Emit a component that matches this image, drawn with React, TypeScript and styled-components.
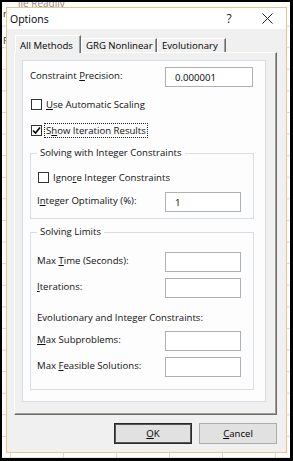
import React from "react"
import styled, { createGlobalStyle } from "styled-components"

const GlobalStyle = createGlobalStyle`
  html, body {
    margin: 0;
    padding: 0;
    background: #fff;
  }
  body {
    font-family: "Open Sans", "Noto Sans", "Liberation Sans", sans-serif;
    font-size: 9.6px;
    color: #111;
  }
`

const Frame = styled.div`
  box-sizing: border-box;
  width: 293px;
  height: 461px;
  border-style: solid;
  border-color: #000;
  border-width: 2px 3px 3px 2px;
  display: grid;
  grid-template-columns: 4px 281px 1fr;
  grid-template-rows: 5px 446px 1fr;
  overflow: hidden;
  background-color: #fff;
  background-image: linear-gradient(to right, #d6d6d6 1px, transparent 1px),
    linear-gradient(to bottom, #d6d6d6 1px, transparent 1px);
  background-size: 53px 100%, 100% 21.6px;
  background-position: 8px 0, 0 2px;
`

const TopStrip = styled.div`
  grid-column: 1 / -1;
  grid-row: 1;
  overflow: hidden;
  padding-left: 16px;
  background: #fff;
`

const SheetText = styled.div`
  margin-top: -5px;
  line-height: 12px;
  font-size: 10px;
  color: #888;
`

const SideStrip = styled.div`
  grid-column: 1;
  grid-row: 2;
  overflow: hidden;
  display: flex;
  flex-direction: column;
  line-height: 12px;
  color: #333;
`

const SideLetter = styled.span<{ $top: number }>`
  margin-top: ${(p) => p.$top}px;
  margin-left: 1px;
`

const Dialog = styled.div`
  grid-column: 2;
  grid-row: 2;
  box-sizing: border-box;
  border: 1px solid #f0c189;
  background: #f0f0f0;
  display: flex;
  flex-direction: column;
`

const TitleBar = styled.div`
  height: 21px;
  background: #fff;
  display: flex;
  align-items: center;
  padding: 0 2px 0 3px;
`

const Title = styled.span`
  flex: 1;
  font-size: 10.5px;
  color: #000;
`

const CaptionButton = styled.span<{ $w: number }>`
  width: ${(p) => p.$w}px;
  height: 21px;
  display: flex;
  align-items: center;
  justify-content: center;
  font-size: 12px;
  color: #222;
`

const Body = styled.div`
  flex: 1;
  display: flex;
  flex-direction: column;
  padding: 6px 9px 0 7px;
`

const TabRow = styled.div`
  height: 17px;
  display: flex;
  align-items: flex-end;
  padding-left: 1px;
`

const Tab = styled.div<{ $w: number; $active?: boolean }>`
  box-sizing: border-box;
  width: ${(p) => p.$w}px;
  height: ${(p) => (p.$active ? 18 : 14)}px;
  margin-bottom: ${(p) => (p.$active ? -1 : 0)}px;
  position: relative;
  z-index: ${(p) => (p.$active ? 1 : 0)};
  background: #f0f0f0;
  border-top: 1px solid #fff;
  border-left: 1px solid #fff;
  border-right: 1px solid #6b6b6b;
  box-shadow: inset -1px 0 0 #a0a0a0;
  padding: ${(p) => (p.$active ? "2px" : "0")} 0 0 4px;
  display: flex;
  align-items: center;
  white-space: nowrap;
  overflow: hidden;
  color: #000;
`

const Panel = styled.div`
  box-sizing: border-box;
  width: 263px;
  height: 363px;
  border-style: solid;
  border-width: 1px;
  border-color: #fff #6b6b6b #6b6b6b #fff;
  box-shadow: inset -1px -1px 0 #a0a0a0;
  padding: 7px 0 0 7px;
`

const InnerBox = styled.div`
  box-sizing: border-box;
  width: 244px;
  height: 342px;
  background: #fdfdfd;
  border: 1px solid #d7dee6;
  padding: 6px 0 0 7px;
  display: flex;
  flex-direction: column;
`

const FieldRow = styled.div<{ $mt?: number }>`
  display: flex;
  align-items: center;
  height: 20px;
  margin-top: ${(p) => p.$mt ?? 0}px;
`

const FieldLabel = styled.span<{ $w: number }>`
  width: ${(p) => p.$w}px;
  white-space: nowrap;
  margin-top: -3px;
`

const TextBox = styled.input<{ $w: number }>`
  box-sizing: border-box;
  width: ${(p) => p.$w}px;
  height: 20px;
  margin: 0;
  border: 1px solid #adb0b6;
  background: #fff;
  padding: 0 0 0 9px;
  font: inherit;
  color: #000;
  outline: none;
`

const CheckRow = styled.div<{ $mt?: number }>`
  display: flex;
  align-items: center;
  gap: 3px;
  height: 14px;
  margin-top: ${(p) => p.$mt ?? 0}px;
`

const Box = styled.span`
  box-sizing: border-box;
  width: 11px;
  height: 11px;
  margin-left: 1px;
  border: 1px solid #333;
  background: #fff;
  display: flex;
  align-items: center;
  justify-content: center;
`

const CheckText = styled.span<{ $focus?: boolean }>`
  white-space: nowrap;
  padding: 0 1px;
  outline: ${(p) => (p.$focus ? "1px dotted #222" : "none")};
  line-height: 13px;
`

const Group = styled.fieldset<{ $pt: number; $pb: number; $mt: number }>`
  box-sizing: border-box;
  width: 224px;
  min-inline-size: 0;
  margin: ${(p) => p.$mt}px 0 0 0;
  padding: ${(p) => p.$pt}px 0 ${(p) => p.$pb}px 6px;
  border: 1px solid #d7dee6;
  display: flex;
  flex-direction: column;
`

const Legend = styled.legend`
  padding: 0 3px;
  line-height: 14px;
  color: #111;
`

const Note = styled.div`
  margin-top: 13px;
  line-height: 14px;
  white-space: nowrap;
`

const ButtonRow = styled.div`
  display: flex;
  justify-content: flex-end;
  gap: 7px;
  margin-top: 8px;
`

const Button = styled.button<{ $default?: boolean }>`
  box-sizing: border-box;
  width: 78px;
  height: 21px;
  margin: 0;
  padding: 0;
  font: inherit;
  color: #000;
  background: #e1e1e1;
  border: 1px solid ${(p) => (p.$default ? "#2a2a2a" : "#adadad")};
  box-shadow: ${(p) => (p.$default ? "inset 0 0 0 1px #555" : "none")};
`

const Key = styled.span`
  text-decoration: underline;
  text-underline-offset: 1px;
`

const Check = () => (
  <svg width="9" height="9" viewBox="0 0 9 9">
    <path d="M1 4.5 L3.5 7 L8 1.5" fill="none" stroke="#000" strokeWidth="1.6" />
  </svg>
)

const CloseGlyph = () => (
  <svg width="11" height="11" viewBox="0 0 11 11">
    <path d="M0.5 0.5 L10.5 10.5 M10.5 0.5 L0.5 10.5" stroke="#222" strokeWidth="1" />
  </svg>
)

const App: React.FC = () => {
  return (
    <>
      <GlobalStyle />
      <Frame>
        <TopStrip>
          <SheetText>ile Readily</SheetText>
        </TopStrip>
        <SideStrip>
          <SideLetter $top={1}>r</SideLetter>
          <SideLetter $top={15}>F</SideLetter>
        </SideStrip>
        <Dialog>
          <TitleBar>
            <Title>Options</Title>
            <CaptionButton $w={20}>?</CaptionButton>
            <CaptionButton $w={11} />
            <CaptionButton $w={34}>
              <CloseGlyph />
            </CaptionButton>
          </TitleBar>
          <Body>
            <TabRow>
              <Tab $w={66} $active>
                All Methods
              </Tab>
              <Tab $w={76}>GRG Nonlinear</Tab>
              <Tab $w={69}>Evolutionary</Tab>
            </TabRow>
            <Panel>
              <InnerBox>
                <FieldRow>
                  <FieldLabel $w={135}>
                    Constraint <Key>P</Key>recision:
                  </FieldLabel>
                  <TextBox $w={88} readOnly value="0.000001" />
                </FieldRow>
                <CheckRow $mt={10}>
                  <Box />
                  <CheckText>
                    <Key>U</Key>se Automatic Scaling
                  </CheckText>
                </CheckRow>
                <CheckRow $mt={12}>
                  <Box>
                    <Check />
                  </Box>
                  <CheckText $focus>
                    S<Key>h</Key>ow Iteration Results
                  </CheckText>
                </CheckRow>
                <Group $mt={9} $pt={10} $pb={6}>
                  <Legend>Solving with Integer Constraints</Legend>
                  <CheckRow>
                    <Box />
                    <CheckText>
                      Igno<Key>r</Key>e Integer Constraints
                    </CheckText>
                  </CheckRow>
                  <FieldRow $mt={8}>
                    <FieldLabel $w={128}>
                      I<Key>n</Key>teger Optimality (%):
                    </FieldLabel>
                    <TextBox $w={76} readOnly value="1" />
                  </FieldRow>
                </Group>
                <Group $mt={6} $pt={13} $pb={12}>
                  <Legend>Solving Limits</Legend>
                  <FieldRow>
                    <FieldLabel $w={128}>
                      Max <Key>T</Key>ime (Seconds):
                    </FieldLabel>
                    <TextBox $w={76} readOnly value="" />
                  </FieldRow>
                  <FieldRow $mt={6}>
                    <FieldLabel $w={128}>
                      <Key>I</Key>terations:
                    </FieldLabel>
                    <TextBox $w={76} readOnly value="" />
                  </FieldRow>
                  <Note>Evolutionary and Integer Constraints:</Note>
                  <FieldRow $mt={6}>
                    <FieldLabel $w={128}>
                      <Key>M</Key>ax Subproblems:
                    </FieldLabel>
                    <TextBox $w={76} readOnly value="" />
                  </FieldRow>
                  <FieldRow $mt={6}>
                    <FieldLabel $w={128}>
                      Max <Key>F</Key>easible Solutions:
                    </FieldLabel>
                    <TextBox $w={76} readOnly value="" />
                  </FieldRow>
                </Group>
              </InnerBox>
            </Panel>
            <ButtonRow>
              <Button $default>
                <Key>O</Key>K
              </Button>
              <Button>
                <Key>C</Key>ancel
              </Button>
            </ButtonRow>
          </Body>
        </Dialog>
      </Frame>
    </>
  )
}

export default App
